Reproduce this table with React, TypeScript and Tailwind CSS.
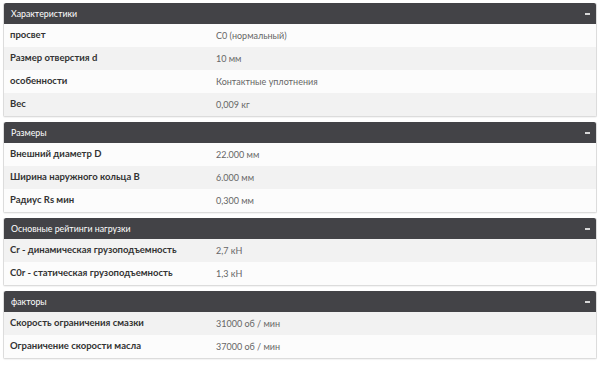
const sections: { title: string; rows: [string, string][]; startGray?: boolean }[] = [
  {
    title: "Характеристики",
    rows: [
      ["просвет", "C0 (нормальный)"],
      ["Размер отверстия d", "10 мм"],
      ["особенности", "Контактные уплотнения"],
      ["Вес", "0,009 кг"],
    ],
  },
  {
    title: "Размеры",
    rows: [
      ["Внешний диаметр D", "22.000 мм"],
      ["Ширина наружного кольца B", "6.000 мм"],
      ["Радиус Rs мин", "0,300 мм"],
    ],
  },
  {
    title: "Основные рейтинги нагрузки",
    startGray: true,
    rows: [
      ["Cr - динамическая грузоподъемность", "2,7 кН"],
      ["C0r - статическая грузоподъемность", "1,3 кН"],
    ],
  },
  {
    title: "факторы",
    startGray: true,
    rows: [
      ["Скорость ограничения смазки", "31000 об / мин"],
      ["Ограничение скорости масла", "37000 об / мин"],
    ],
  },
];

function Panel({ title, rows, startGray }: (typeof sections)[number]) {
  return (
    <div className="mb-[5px] border border-t-0 border-[#dcdcdc] rounded-[2px] bg-[#fcfcfc] shadow-[0_1px_1px_rgba(0,0,0,0.05)]">
      <div className="flex h-[21px] items-center justify-between rounded-t-[2px] bg-[#434347] pl-[7px] pr-[6px] text-[8.8px] text-white">
        <span>{title}</span>
        <span className="block h-[2px] w-[5px] bg-[#d8d8d8]" />
      </div>
      {rows.map(([label, value], i) => {
        const gray = startGray ? i % 2 === 0 : i % 2 === 1;
        return (
          <div
            key={label}
            className={`flex h-[23px] items-center ${gray ? "bg-[#f2f2f2]" : "bg-[#fcfcfc]"}`}
          >
            <div className="w-[212px] shrink-0 pl-[6px] text-[9.5px] font-bold text-[#333]">{label}</div>
            <div className="text-[9px] text-[#666]">{value}</div>
          </div>
        );
      })}
    </div>
  );
}

export default function App() {
  return (
    <div className="min-h-screen bg-white px-[3px] pt-[3px] font-['Lato',sans-serif]">
      {sections.map((s) => (
        <Panel key={s.title} {...s} />
      ))}
    </div>
  );
}
